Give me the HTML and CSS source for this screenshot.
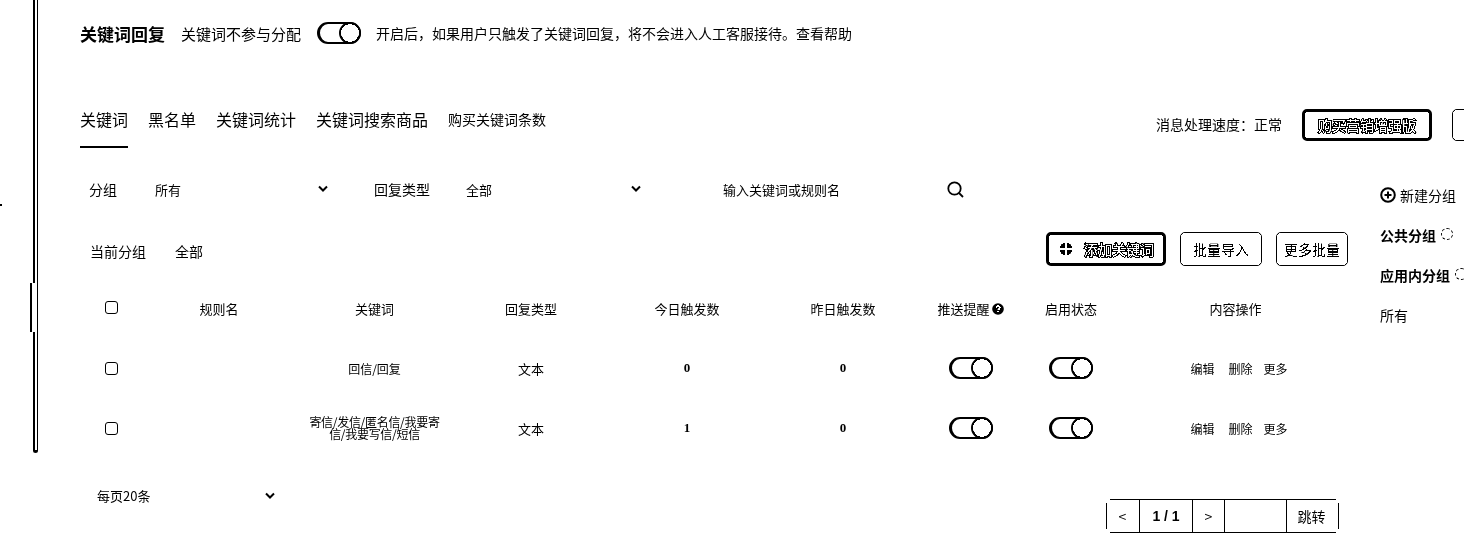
FILE: index.html
```html
<!DOCTYPE html>
<html lang="zh-CN">
<head>
    <meta charset="UTF-8">
    <title>关键词回复</title>
    <link rel="stylesheet" href="styles.css">
</head>
<body>
    <div class="page">
        <!-- Left rail -->
        <div class="rail"><div class="rail-line"></div></div>

        <div class="main">
            <div class="head-row">
                <h1 class="title">关键词回复</h1>
                <span class="head-label">关键词不参与分配</span>
                <span class="switch"></span>
                <span class="head-note">开启后，如果用户只触发了关键词回复，将不会进入人工客服接待。查看帮助</span>
            </div>

            <div class="tabs-row">
                <div class="tabs">
                    <a class="tab active">关键词</a>
                    <a class="tab">黑名单</a>
                    <a class="tab">关键词统计</a>
                    <a class="tab">关键词搜索商品</a>
                    <a class="tab small">购买关键词条数</a>
                </div>
                <div class="tabs-side">
                    <span class="speed">消息处理速度：正常</span>
                    <button class="btn heavy buy"><span class="knock">购买营销增强版</span></button>
                    <button class="btn cut"></button>
                </div>
            </div>

            <div class="body-wrap">
                <div class="content">
                    <div class="filter-row">
                        <span class="filter-label first">分组</span>
                        <span class="select group-select">所有
                            <svg class="chev" viewBox="0 0 12 8"><path d="M2 1.5l4 4 4-4" /></svg>
                        </span>
                        <span class="filter-label">回复类型</span>
                        <span class="select type-select">全部
                            <svg class="chev" viewBox="0 0 12 8"><path d="M2 1.5l4 4 4-4" /></svg>
                        </span>
                        <span class="search-text">输入关键词或规则名</span>
                        <svg class="search-icon" viewBox="0 0 17 17"><circle cx="7.500" cy="7.500" r="6.200" /><path d="M12 12l4 4" /></svg>
                    </div>

                    <div class="current-row">
                        <span class="current-label">当前分组</span>
                        <span class="current-value">全部</span>
                        <div class="actions">
                            <button class="btn heavy add">
                                <svg class="add-icon" viewBox="0 0 12 12"><path d="M5 0v5H0a5 5 0 0 1 5-5z" /><path d="M7 0v5h5a5 5 0 0 0-5-5z" /><path d="M5 12V7H0a5 5 0 0 0 5 5z" /><path d="M7 12V7h5a5 5 0 0 1-5 5z" /></svg>
                                <span class="knock">添加关键词</span>
                            </button>
                            <button class="btn import">批量导入</button>
                            <button class="btn more">更多批量</button>
                        </div>
                    </div>

                    <div class="grid-row grid-head">
                        <span><span class="check"></span></span>
                        <span>规则名</span>
                        <span>关键词</span>
                        <span>回复类型</span>
                        <span>今日触发数</span>
                        <span>昨日触发数</span>
                        <span class="push-head">推送提醒
                            <svg class="help" viewBox="0 0 12 12"><circle cx="6" cy="6" r="5.800" /><path d="M4.200 4.800c0-2.300 3.700-2.300 3.700-.1 0 1.300-1.900 1.300-1.900 2.500" /><path d="M6 8.300v1.200" /></svg>
                        </span>
                        <span>启用状态</span>
                        <span>内容操作</span>
                    </div>

                    <div class="grid-row">
                        <span><span class="check"></span></span>
                        <span></span>
                        <span>回信/回复</span>
                        <span class="type-text">文本</span>
                        <span class="num">0</span>
                        <span class="num">0</span>
                        <span><span class="switch"></span></span>
                        <span><span class="switch"></span></span>
                        <span class="ops"><a>编辑</a><a>删除</a><a>更多</a></span>
                    </div>

                    <div class="grid-row">
                        <span><span class="check"></span></span>
                        <span></span>
                        <span class="wrap">寄信/发信/匿名信/我要寄信/我要写信/短信</span>
                        <span class="type-text">文本</span>
                        <span class="num">1</span>
                        <span class="num">0</span>
                        <span><span class="switch"></span></span>
                        <span><span class="switch"></span></span>
                        <span class="ops"><a>编辑</a><a>删除</a><a>更多</a></span>
                    </div>

                    <div class="foot-row">
                        <span class="select size-select">每页20条
                            <svg class="chev" viewBox="0 0 12 8"><path d="M2 1.5l4 4 4-4" /></svg>
                        </span>
                        <div class="pager">
                            <span class="pg-btn prev">&lt;</span>
                            <span class="pg-count">1 / 1</span>
                            <span class="pg-btn next">&gt;</span>
                            <span class="pg-input"></span>
                            <span class="pg-go">跳转</span>
                        </div>
                    </div>
                </div>

                <!-- Group list on the right, runs off the window -->
                <div class="groups">
                    <div class="group-new">
                        <svg class="plus-icon" viewBox="0 0 16 16"><circle cx="8" cy="8" r="6.800" /><path d="M8 4.500v7M4.500 8h7" /></svg>
                        新建分组
                    </div>
                    <div class="group-item strong">公共分组 <span class="dots"></span></div>
                    <div class="group-item strong">应用内分组 <span class="dots"></span></div>
                    <div class="group-item">所有</div>
                </div>
            </div>
        </div>
    </div>
</body>
</html>
```

FILE: styles.css
```css
html, body {
    margin: 0;
    height: 100%;
    overflow: hidden;
    background: #fff;
}

body {
    color: #000;
    font-family: "Noto Sans CJK SC", "Liberation Sans", sans-serif;
    font-size: 14px;
}

/* the whole page is almost black and white, no greys */
.page {
    display: flex;
    width: 1464px;
    height: 547px;
    overflow: hidden;
    filter: grayscale(1) contrast(12);
}

.rail {
    flex: 0 0 80px;
    position: relative;
}

/* small tick at the window edge */
.rail::before {
    content: "";
    position: absolute;
    left: 0;
    top: 204px;
    width: 2px;
    height: 2px;
    background: #000;
}

.rail-line {
    position: relative;
    width: 2px;
    height: 450px;
    margin-left: 33px;
    border-left: 2px solid #000;
    border-right: 1px solid #000;
    border-bottom: 3px solid #000;
    border-radius: 0 0 3px 3px;
}

/* the thick line jogs to the left for a stretch */
.rail-line::before {
    content: "";
    position: absolute;
    left: -5px;
    top: 283px;
    width: 2px;
    height: 49px;
    background: #000;
    border-right: 3px solid #fff;
}

.main {
    flex: 1;
    min-width: 0;
}

.head-row {
    display: flex;
    align-items: center;
    height: 22px;
    margin-top: 22px;
}

.title {
    margin: 0 16px 0 0;
    font-size: 17px;
    font-weight: 700;
}

.head-label {
    margin-right: 16px;
    font-size: 15px;
}

.head-note {
    margin-left: 15px;
}

.switch {
    display: inline-block;
    position: relative;
    box-sizing: border-box;
    width: 44px;
    height: 22px;
    border: 2px solid #000;
    border-left-width: 3px;
    border-radius: 11px;
    vertical-align: middle;
}

.switch::after {
    content: "";
    position: absolute;
    top: -2px;
    right: -2px;
    box-sizing: border-box;
    width: 22px;
    height: 22px;
    border: 2px solid #000;
    border-radius: 50%;
    background: #fff;
}

.tabs-row {
    display: flex;
    justify-content: space-between;
    width: 1412px;
    height: 44px;
    margin-top: 60px;
}

.tabs {
    display: flex;
    gap: 20px;
}

.tab {
    box-sizing: border-box;
    height: 44px;
    padding-top: 4px;
    font-size: 16px;
    line-height: 22px;
}

.tab.active {
    border-bottom: 2px solid #000;
}

.tab.small {
    font-size: 14px;
}

.tabs-side {
    display: flex;
    align-items: flex-start;
}

.speed {
    margin: 10px 20px 0 0;
}

.btn {
    box-sizing: border-box;
    padding: 0;
    border: 1px solid #000;
    border-radius: 5px;
    background: #fff;
    color: #000;
    font-family: inherit;
    font-size: 14px;
}

.btn.heavy {
    border: 3px solid #000;
}

/* text on the heavy buttons is knocked out of a dark smear */
.knock {
    color: #fff;
    -webkit-text-stroke: 2px #000;
    paint-order: stroke fill;
}

.buy {
    flex: none;
    width: 130px;
    height: 32px;
    margin-top: 5px;
}

.cut {
    flex: none;
    width: 40px;
    height: 32px;
    margin: 5px 0 0 20px;
}

.body-wrap {
    display: flex;
}

.content {
    flex: 0 0 1270px;
}

.filter-row {
    display: flex;
    align-items: center;
    height: 30px;
    margin-top: 26px;
}

.filter-label.first {
    margin-left: 9px;
}

.select {
    display: flex;
    align-items: center;
    justify-content: space-between;
    font-size: 13px;
}

.chev {
    width: 12px;
    height: 8px;
    fill: none;
    stroke: #000;
    stroke-width: 2;
}

.group-select {
    width: 174px;
    margin: 0 45px 0 38px;
}

.type-select {
    width: 176px;
    margin: 0 81px 0 36px;
}

.search-text {
    font-size: 13px;
}

.search-icon {
    width: 17px;
    height: 17px;
    margin-left: 107px;
    fill: none;
    stroke: #000;
    stroke-width: 1.800;
}

.current-row {
    display: flex;
    align-items: center;
    height: 34px;
    margin-top: 28px;
    padding-left: 10px;
}

.current-label {
    margin: 3px 29px 0 0;
}

.current-value {
    margin-top: 3px;
}

.actions {
    display: flex;
    gap: 14px;
    margin-left: auto;
    margin-right: 2px;
}

.add {
    display: flex;
    align-items: center;
    gap: 12px;
    width: 120px;
    height: 34px;
    padding-left: 11px;
}

.add-icon {
    width: 12px;
    height: 12px;
}

.import {
    width: 82px;
    height: 34px;
}

.more {
    width: 72px;
    height: 34px;
}

.grid-row {
    display: grid;
    grid-template-columns: 62px 154px 157px 156px 156px 156px 100px 100px 229px;
    align-items: center;
    height: 60px;
    font-size: 12px;
    text-align: center;
}

.grid-head {
    margin-top: 12px;
    font-size: 13px;
}

.check {
    display: inline-block;
    box-sizing: border-box;
    width: 13px;
    height: 13px;
    margin-bottom: 2px;
    border: 1px solid #000;
    border-radius: 3px;
    vertical-align: middle;
}

.grid-head .check {
    margin-bottom: 4px;
}

.type-text {
    font-size: 13px;
}

.push-head {
    white-space: nowrap;
}

.help {
    width: 12px;
    height: 12px;
    vertical-align: -1px;
    fill: #000;
    stroke: #fff;
    stroke-width: 1.500;
}

.help circle {
    stroke: none;
}

.help path {
    fill: none;
}

.wrap {
    display: block;
    padding: 0 10px;
    letter-spacing: -0.3px;
    line-height: 12px;
}

.num {
    font-family: "Liberation Serif", serif;
    font-size: 13px;
    font-weight: 700;
}

.ops {
    display: flex;
    justify-content: center;
    gap: 12px;
    padding-left: 7px;
}

.ops a:nth-child(2) {
    margin: 0 -1px 0 2px;
}

.foot-row {
    display: flex;
    align-items: flex-start;
    justify-content: space-between;
    height: 88px;
}

.size-select {
    width: 179px;
    margin: 28px 0 0 17px;
}

/* side lines stop short of the top and bottom rules */
.pager {
    display: flex;
    position: relative;
    height: 34px;
    margin: 41px 11px 0 0;
    padding: 0 3px 0 4px;
    line-height: 32px;
    text-align: center;
}

.pager::before,
.pager::after {
    content: "";
    position: absolute;
    top: 4px;
    bottom: 4px;
    width: 1px;
    background: #000;
}

.pager::before {
    left: 0;
}

.pager::after {
    right: 0;
}

.pager > span {
    box-sizing: border-box;
    border-top: 1px solid #000;
    border-bottom: 1px solid #000;
    border-right: 1px solid #000;
}

.pager > span:last-child {
    border-right: none;
}

.pg-btn.prev {
    width: 30px;
    padding-right: 4px;
}

.pg-btn.next {
    width: 32px;
}

.pg-count {
    width: 53px;
    font-family: "Liberation Sans", sans-serif;
    font-weight: 700;
}

.pg-input {
    width: 62px;
}

.pg-go {
    width: 49px;
}

.groups {
    flex: none;
    margin: 36px 0 0 30px;
}

.group-new {
    display: flex;
    align-items: center;
    gap: 4px;
    height: 20px;
    margin: 1px 0 20px;
}

.plus-icon {
    width: 16px;
    height: 16px;
    fill: none;
    stroke: #000;
    stroke-width: 2;
}

.group-item {
    height: 20px;
    margin-bottom: 20px;
    line-height: 20px;
    white-space: nowrap;
}

.group-item.strong {
    font-weight: 700;
}

.dots {
    display: inline-block;
    width: 10px;
    height: 10px;
    margin-left: 2px;
    border: 1px dashed #000;
    border-radius: 50%;
    vertical-align: 1px;
}
```
